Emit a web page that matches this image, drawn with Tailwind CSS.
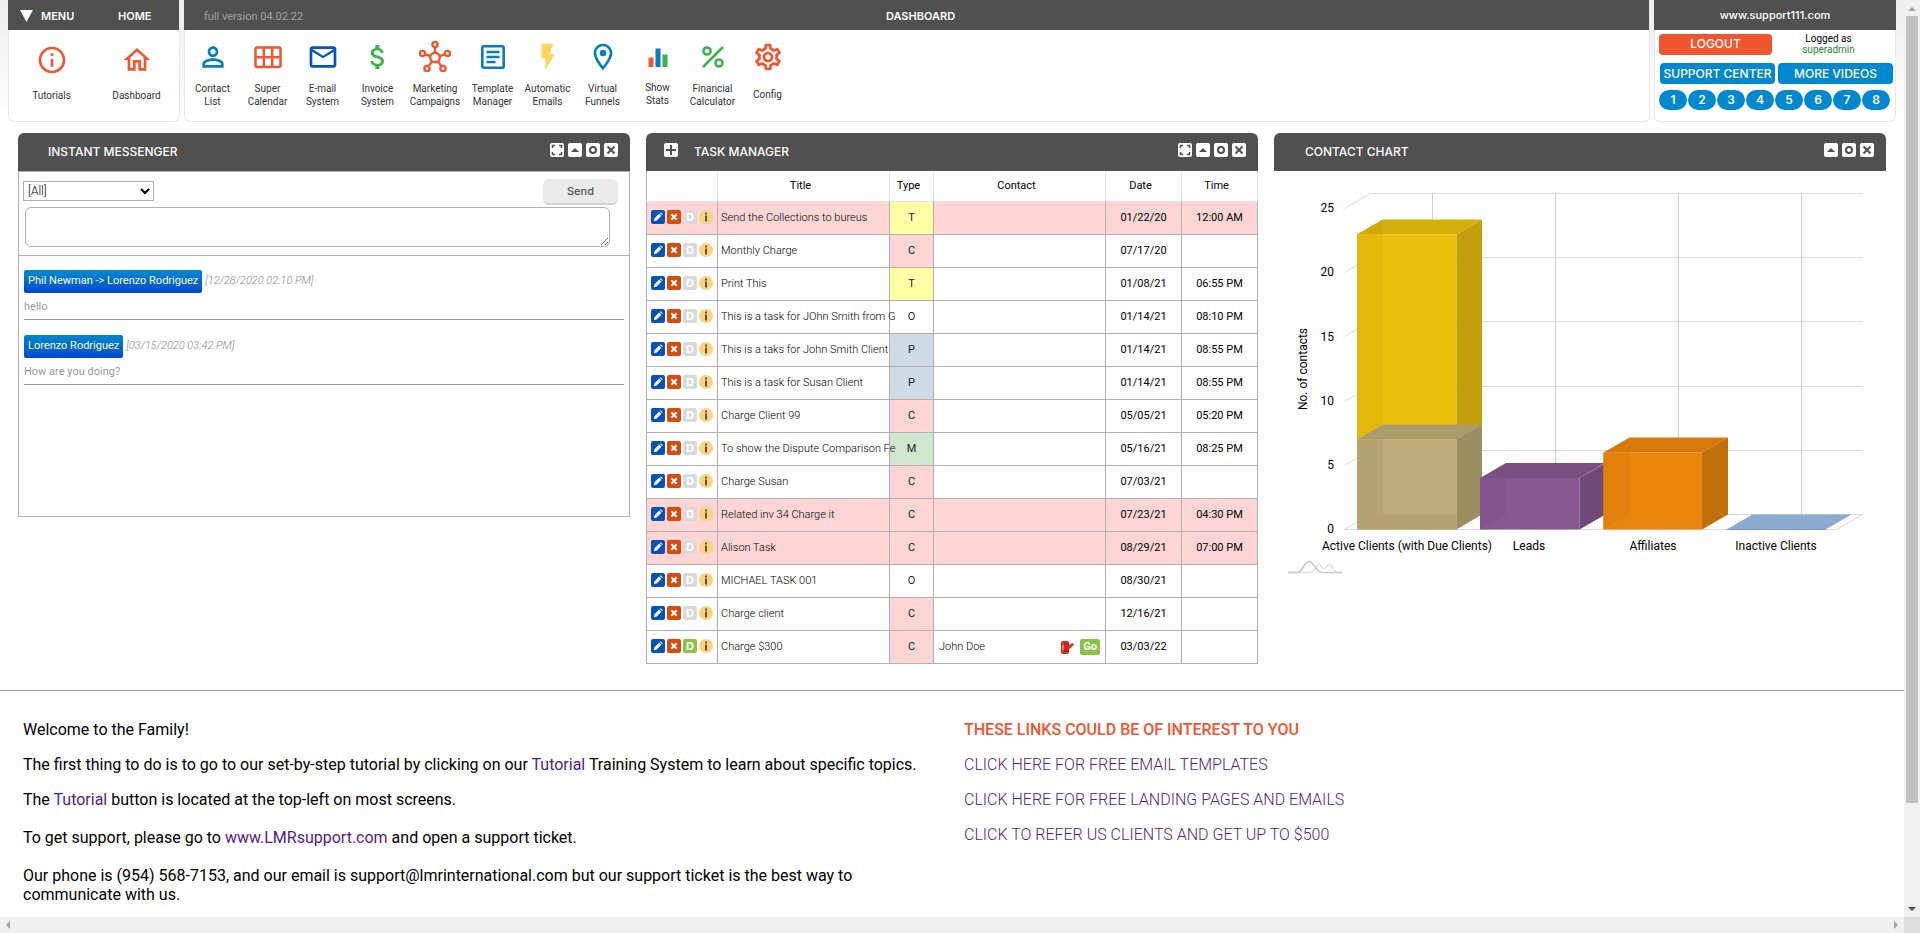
<!DOCTYPE html>
<html lang="en">
<head>
<meta charset="utf-8">
<title>Dashboard</title>
<script src="https://cdn.jsdelivr.net/npm/@tailwindcss/browser@4"></script>
</head>
<body class="h-screen flex flex-col overflow-hidden bg-white font-['Roboto',sans-serif] text-black">
<div class="flex flex-1 min-h-0">
<main class="flex-1 min-w-0 overflow-hidden">

<header class="flex gap-1 px-2 bg-linear-to-b from-[#eeeeee] to-white h-[122px]">
  <nav class="w-[172px] flex flex-col bg-white border border-t-0 border-[#e8e8e8] rounded-b-md" aria-label="Main">
    <div class="h-[30px] -ml-px bg-[#505050] text-white flex items-center font-['Inter',sans-serif] text-[11px] font-semibold pt-[2px]">
      <button class="flex items-center gap-2 pl-[12px] w-[110px]"><svg class="w-[13px] h-3" viewBox="0 0 13 12"><path d="M0 0h13L6.500 12z" fill="#fff"/></svg>MENU</button>
      <a href="#">HOME</a>
    </div>
    <div class="flex text-[10px] leading-[13px] text-center text-[#333] pt-[14px]">
      <a href="#" class="flex-1 flex flex-col items-center gap-[13px]"><svg class="size-8" viewBox="0 0 24 24" fill="#f0562f"><path d="M11 7h2v2h-2zm0 4h2v6h-2zm1-9C6.480 2 2 6.480 2 12s4.480 10 10 10 10-4.480 10-10S17.520 2 12 2zm0 18c-4.410 0-8-3.590-8-8s3.590-8 8-8 8 3.590 8 8-3.590 8-8 8z"/></svg>Tutorials</a>
      <a href="#" class="flex-1 flex flex-col items-center gap-[13px]"><svg class="size-8" viewBox="0 0 24 24" fill="#f0562f"><path d="M12 5.690l5 4.500V18h-2v-6H9v6H7v-7.810l5-4.500M12 3L2 12h3v8h6v-6h2v6h6v-8h3L12 3z"/></svg>Dashboard</a>
    </div>
  </nav>

  <section class="flex-1 min-w-0 flex flex-col bg-white border border-t-0 border-[#e8e8e8] rounded-b-md">
    <div class="h-[30px] -ml-px bg-[#505050] grid grid-cols-[1fr_auto_1fr] items-center pt-[2px] px-5">
      <span class="text-[11px] text-[#a0a0a0] pt-[2px]">full version 04.02.22</span>
      <h1 class="font-['Inter',sans-serif] text-[11px] font-semibold text-white pl-2">DASHBOARD</h1>
    </div>
    <div class="flex pt-[11px] text-[10px] leading-[13px] text-center text-[#333]">
      <a href="#" class="w-[55px] flex flex-col items-center gap-[9px]"><svg class="size-8" viewBox="0 0 24 24" fill="#067dbd"><path d="M12 6c1.100 0 2 .9 2 2s-.9 2-2 2-2-.9-2-2 .9-2 2-2m0 9c2.700 0 5.800 1.290 6 2v1H6v-.99c.2-.72 3.300-2.010 6-2.010m0-11C9.790 4 8 5.790 8 8s1.790 4 4 4 4-1.790 4-4-1.790-4-4-4zm0 9c-2.670 0-8 1.340-8 4v3h16v-3c0-2.660-5.330-4-8-4z"/></svg><span>Contact<br>List</span></a>
      <a href="#" class="w-[55px] flex flex-col items-center gap-[9px]"><svg class="size-8" viewBox="0 0 32 32" fill="none" stroke="#f0562f" stroke-width="2.500"><rect x="3.500" y="6.500" width="25" height="19.500" rx="1.500"/><path d="M3 16.200h26M11.800 6v20M20.200 6v20"/></svg><span>Super<br>Calendar</span></a>
      <a href="#" class="w-[55px] flex flex-col items-center gap-[9px]"><svg class="size-8" viewBox="0 0 24 24" fill="#0354bd"><path d="M22 6c0-1.100-.9-2-2-2H4c-1.100 0-2 .9-2 2v12c0 1.100.9 2 2 2h16c1.100 0 2-.9 2-2V6zm-2 0l-8 5-8-5h16zm0 12H4V8l8 5 8-5v10z"/></svg><span>E-mail<br>System</span></a>
      <a href="#" class="w-[55px] flex flex-col items-center gap-[9px]"><svg class="size-8" viewBox="0 0 24 24" fill="#39b54a"><path d="M11.800 10.900c-2.270-.59-3-1.200-3-2.150 0-1.090 1.010-1.850 2.700-1.850 1.780 0 2.440.85 2.500 2.100h2.210c-.07-1.720-1.120-3.300-3.210-3.810V3h-3v2.160c-1.940.42-3.500 1.680-3.500 3.610 0 2.310 1.910 3.460 4.700 4.130 2.500.6 3 1.480 3 2.410 0 .69-.49 1.790-2.700 1.790-2.060 0-2.870-.92-2.980-2.100h-2.200c.12 2.190 1.760 3.420 3.680 3.830V21h3v-2.150c1.950-.37 3.500-1.500 3.500-3.550 0-2.840-2.430-3.810-4.700-4.400z"/></svg><span>Invoice<br>System</span></a>
      <a href="#" class="w-[60px] flex flex-col items-center gap-[9px]"><svg class="size-8" viewBox="0 0 32 32" fill="none" stroke="#f0562f" stroke-width="2.400"><circle cx="16" cy="16.500" r="4.800"/><circle cx="16" cy="3.500" r="2.600"/><circle cx="3.500" cy="12.500" r="2.600"/><circle cx="28.500" cy="12.500" r="2.600"/><circle cx="8" cy="27.500" r="2.600"/><circle cx="24" cy="27.500" r="2.600"/><path d="M16 6v5.500M6 13.400l5.400 1.800M26 13.400l-5.400 1.800M9.500 25.400l3.600-5M22.500 25.400l-3.600-5"/></svg><span>Marketing<br>Campaigns</span></a>
      <a href="#" class="w-[55px] flex flex-col items-center gap-[9px]"><svg class="size-8" viewBox="0 0 32 32" fill="none" stroke="#067dbd" stroke-width="2.600"><rect x="5.300" y="5.300" width="21.400" height="21.400" rx="1.500"/><path d="M9.500 11h13M9.500 16h13M9.500 21h9"/></svg><span>Template<br>Manager</span></a>
      <a href="#" class="w-[55px] flex flex-col items-center gap-[9px]"><svg class="size-8" viewBox="0 0 24 24" fill="#ffd461"><path d="M7 2v11h3v9l7-12h-4l3-8z"/></svg><span>Automatic<br>Emails</span></a>
      <a href="#" class="w-[55px] flex flex-col items-center gap-[9px]"><svg class="size-8" viewBox="0 0 24 24" fill="#067dbd"><path d="M12 2C8.130 2 5 5.130 5 9c0 5.250 7 13 7 13s7-7.750 7-13c0-3.870-3.130-7-7-7zM7 9c0-2.760 2.240-5 5-5s5 2.240 5 5c0 2.880-2.880 7.190-5 9.880C9.920 16.210 7 11.850 7 9z"/><circle cx="12" cy="9" r="2.500"/></svg><span>Virtual<br>Funnels</span></a>
      <a href="#" class="w-[55px] flex flex-col items-center gap-[8px]"><svg class="size-8" viewBox="0 0 32 32"><path d="M6.500 16.500h5V26h-5z" fill="#f0562f"/><path d="M13.500 7.500h5V26h-5z" fill="#067dbd"/><path d="M20.500 13.500h5V26h-5z" fill="#39b54a"/></svg><span>Show<br>Stats</span></a>
      <a href="#" class="w-[55px] flex flex-col items-center gap-[9px]"><svg class="size-8" viewBox="0 0 32 32" fill="none" stroke="#39b54a" stroke-width="2.500"><circle cx="10" cy="10" r="3.600"/><circle cx="22" cy="22" r="3.600"/><path d="M6 26L26 6"/></svg><span>Financial<br>Calculator</span></a>
      <a href="#" class="w-[55px] flex flex-col items-center gap-[15px]"><svg class="size-8" viewBox="0 0 24 24" fill="#f0562f"><path d="M19.430 12.980c.04-.32.07-.64.07-.98 0-.34-.03-.66-.07-.98l2.110-1.650c.19-.15.24-.42.12-.64l-2-3.460c-.09-.16-.26-.25-.44-.25-.06 0-.12.01-.17.03l-2.490 1c-.52-.4-1.080-.73-1.690-.98l-.38-2.650C14.460 2.180 14.250 2 14 2h-4c-.25 0-.46.18-.49.42l-.38 2.650c-.61.25-1.170.59-1.690.98l-2.490-1c-.06-.02-.12-.03-.18-.03-.17 0-.34.09-.43.25l-2 3.460c-.13.22-.07.49.12.64l2.110 1.650c-.04.32-.07.65-.07.98 0 .33.03.66.07.98l-2.110 1.650c-.19.15-.24.42-.12.64l2 3.460c.09.16.26.25.44.25.06 0 .12-.01.17-.03l2.490-1c.52.4 1.080.73 1.690.98l.38 2.650c.03.24.24.42.49.42h4c.25 0 .46-.18.49-.42l.38-2.650c.61-.25 1.170-.59 1.690-.98l2.490 1c.06.02.12.03.18.03.17 0 .34-.09.43-.25l2-3.460c.12-.22.07-.49-.12-.64l-2.110-1.650zm-1.980-1.710c.04.31.05.52.05.73 0 .21-.02.43-.05.73l-.14 1.130.89.7 1.080.84-.7 1.210-1.270-.51-1.040-.42-.9.68c-.43.32-.84.56-1.250.73l-1.060.43-.16 1.130-.2 1.350h-1.400l-.19-1.350-.16-1.130-1.060-.43c-.43-.18-.83-.41-1.230-.71l-.91-.7-1.060.43-1.270.51-.7-1.210 1.080-.84.89-.7-.14-1.130c-.03-.31-.05-.54-.05-.74s.02-.43.05-.73l.14-1.130-.89-.7-1.080-.84.7-1.210 1.270.51 1.040.42.9-.68c.43-.32.84-.56 1.250-.73l1.060-.43.16-1.130.2-1.350h1.390l.19 1.350.16 1.130 1.060.43c.43.18.83.41 1.230.71l.91.7 1.060-.43 1.270-.51.7 1.210-1.070.85-.89.7.14 1.130zM12 8c-2.210 0-4 1.790-4 4s1.790 4 4 4 4-1.790 4-4-1.790-4-4-4zm0 6c-1.100 0-2-.9-2-2s.9-2 2-2 2 .9 2 2-.9 2-2 2z"/></svg><span>Config</span></a>
    </div>
  </section>

  <aside class="w-[242px] flex flex-col bg-white border border-t-0 border-[#e8e8e8] rounded-b-md font-['Inter',sans-serif]">
    <div class="h-[30px] -mx-px bg-[#505050] text-white flex items-center justify-center text-[11px] font-medium pt-px">www.support111.com</div>
    <div class="flex items-center pl-1 pt-[3px]">
      <button class="w-[113px] h-[21px] rounded bg-[#ef562f] text-white text-xs font-medium">LOGOUT</button>
      <p class="flex-1 text-center font-['Roboto',sans-serif] text-[10px] leading-[11px] pr-[10px]">Logged as<br><span class="text-[#198a32]">superadmin</span></p>
    </div>
    <div class="flex gap-[3px] px-[5px] pt-2 -mr-1">
      <a href="#" class="w-[115px] h-[21px] rounded bg-[#0088ce] text-white text-xs font-medium flex items-center justify-center whitespace-nowrap">SUPPORT CENTER</a>
      <a href="#" class="w-[115px] h-[21px] rounded bg-[#0088ce] text-white text-xs font-medium flex items-center justify-center whitespace-nowrap">MORE VIDEOS</a>
    </div>
    <div class="flex gap-px pl-1 pt-[6px] text-white text-xs font-semibold">
      <button class="w-7 h-5 rounded-full bg-[#0088ce]">1</button><button class="w-7 h-5 rounded-full bg-[#0088ce]">2</button><button class="w-7 h-5 rounded-full bg-[#0088ce]">3</button><button class="w-7 h-5 rounded-full bg-[#0088ce]">4</button><button class="w-7 h-5 rounded-full bg-[#0088ce]">5</button><button class="w-7 h-5 rounded-full bg-[#0088ce]">6</button><button class="w-7 h-5 rounded-full bg-[#0088ce]">7</button><button class="w-7 h-5 rounded-full bg-[#0088ce]">8</button>
    </div>
  </aside>
</header>

<svg class="hidden">
  <symbol id="expand" viewBox="0 0 14 14"><rect width="14" height="14" rx="2" fill="#fff"/><path d="M2.500 5V2.500H5M9 2.500h2.500V5M11.500 9v2.500H9M5 11.500H2.500V9" fill="none" stroke="#505050" stroke-width="1.600"/></symbol>
  <symbol id="up" viewBox="0 0 14 14"><rect width="14" height="14" rx="2" fill="#fff"/><path d="M3 9l4-4 4 4z" fill="#505050"/></symbol>
  <symbol id="ring" viewBox="0 0 14 14"><rect width="14" height="14" rx="2" fill="#fff"/><circle cx="7" cy="7" r="3" fill="none" stroke="#505050" stroke-width="2"/></symbol>
  <symbol id="close" viewBox="0 0 14 14"><rect width="14" height="14" rx="2" fill="#fff"/><path d="M3.500 3.500l7 7M10.500 3.500l-7 7" stroke="#505050" stroke-width="2"/></symbol>
  <symbol id="plus" viewBox="0 0 14 14"><rect width="14" height="14" rx="2" fill="#fff"/><path d="M7 2v10M2 7h10" stroke="#505050" stroke-width="2"/></symbol>
  <symbol id="edit" viewBox="0 0 14 14"><rect width="14" height="14" rx="2" fill="#0652b8"/><path d="M2.800 11.200l.7-2.900 4.700-4.700 2.200 2.200-4.700 4.700zM8.900 2.900l.8-.7 2.100 2.100-.7.800z" fill="#fff"/></symbol>
  <symbol id="del" viewBox="0 0 14 14"><rect width="14" height="14" rx="2" fill="#d84b0c"/><path d="M4.300 4.300l5.400 5.400M9.700 4.300L4.300 9.700" stroke="#fff" stroke-width="2"/></symbol>
  <symbol id="info" viewBox="0 0 14 14"><circle cx="7" cy="7" r="7" fill="#fcd27c"/><path d="M6 2.500h2v2H6zM6 5.500h2v6H6z" fill="#555"/></symbol>
</svg>

<div class="grid grid-cols-3 gap-4 px-[18px] pt-[11px] items-start">
  <section>
    <div class="h-[38px] bg-[#505050] rounded-t-md flex items-start pt-[10px] pl-[30px] pr-3 gap-1">
      <h2 class="flex-1 font-['Inter',sans-serif] text-xs leading-[18px] font-medium text-white">INSTANT MESSENGER</h2>
      <button aria-label="Expand"><svg class="size-[14px]"><use href="#expand"/></svg></button>
      <button aria-label="Collapse"><svg class="size-[14px]"><use href="#up"/></svg></button>
      <button aria-label="Refresh"><svg class="size-[14px]"><use href="#ring"/></svg></button>
      <button aria-label="Close"><svg class="size-[14px]"><use href="#close"/></svg></button>
    </div>
    <div class="h-[346px] border border-[#b0b0b0] text-[11px]">
      <div class="h-[84px] border-b border-[#b0b0b0] pt-[7px] pl-1 pr-[11px]">
        <div class="flex justify-between items-start h-7">
          <select aria-label="Recipient" class="mt-[2px] w-[131px] h-5 border border-[#b0b0b0] bg-white text-xs font-light"><option>[All]</option></select>
          <button class="w-[75px] h-[26px] rounded-md bg-[#ebebeb] border-b-2 border-[#d0d0d0] text-[#505050] font-['Inter',sans-serif] text-[11px] font-medium">Send</button>
        </div>
        <textarea aria-label="Message" class="block ml-[2px] w-[585px] max-w-full h-10 border border-[#b0b0b0] rounded-md"></textarea>
      </div>
      <div class="px-[5px]">
        <article class="pt-[14px] border-b border-[#999] h-[64px]">
          <div class="flex items-center gap-[3px] h-[23px]"><span class="h-full px-1 rounded-xs bg-linear-to-b from-[#0088ce] to-[#0046ce] text-white flex items-center">Phil Newman -&gt; Lorenzo Rodriguez</span><time class="italic font-light text-[#888]">[12/28/2020 02:10 PM]</time></div>
          <p class="text-[#999] leading-4 mt-[6px]">hello</p>
        </article>
        <article class="pt-[15px] border-b border-[#999] h-[65px]">
          <div class="flex items-center gap-[3px] h-[23px]"><span class="h-full px-1 rounded-xs bg-linear-to-b from-[#0088ce] to-[#0046ce] text-white flex items-center">Lorenzo Rodriguez</span><time class="italic font-light text-[#888]">[03/15/2020 03:42 PM]</time></div>
          <p class="text-[#999] leading-4 mt-[6px]">How are you doing?</p>
        </article>
      </div>
    </div>
  </section>

  <section>
    <div class="h-[38px] bg-[#505050] rounded-t-md flex items-start pt-[10px] pl-[18px] pr-3 gap-1">
      <button aria-label="Add task"><svg class="size-[14px]"><use href="#plus"/></svg></button>
      <h2 class="flex-1 pl-3 font-['Inter',sans-serif] text-xs leading-[18px] font-medium text-white">TASK MANAGER</h2>
      <button aria-label="Expand"><svg class="size-[14px]"><use href="#expand"/></svg></button>
      <button aria-label="Collapse"><svg class="size-[14px]"><use href="#up"/></svg></button>
      <button aria-label="Refresh"><svg class="size-[14px]"><use href="#ring"/></svg></button>
      <button aria-label="Close"><svg class="size-[14px]"><use href="#close"/></svg></button>
    </div>
    <table class="w-full table-fixed border-collapse text-[11px] text-center">
      <colgroup><col class="w-[71px]"><col><col class="w-11"><col class="w-[172px]"><col class="w-[76px]"><col class="w-[76px]"></colgroup>
      <thead><tr class="h-[30px]">
        <th aria-label="Actions" class="border border-[#e4e4e4] border-t-0 border-l-[#b0b0b0]"></th><th class="border border-[#e4e4e4] border-t-0 font-normal pr-[6px]">Title</th><th class="border border-[#e4e4e4] border-t-0 font-normal pr-[6px]">Type</th><th class="border border-[#e4e4e4] border-t-0 font-normal pr-[6px]">Contact</th><th class="border border-[#e4e4e4] border-t-0 font-normal pr-[6px]">Date</th><th class="border border-[#e4e4e4] border-t-0 font-normal pr-[6px]">Time</th>
      </tr></thead>
      <tbody id="tasks"></tbody>
    </table>
  </section>

  <section>
    <div class="h-[38px] bg-[#505050] rounded-t-md flex items-start pt-[10px] pl-[31px] pr-3 gap-1">
      <h2 class="flex-1 font-['Inter',sans-serif] text-xs leading-[18px] font-medium text-white">CONTACT CHART</h2>
      <button aria-label="Collapse"><svg class="size-[14px]"><use href="#up"/></svg></button>
      <button aria-label="Refresh"><svg class="size-[14px]"><use href="#ring"/></svg></button>
      <button aria-label="Close"><svg class="size-[14px]"><use href="#close"/></svg></button>
    </div>
    <svg class="w-full text-xs" viewBox="0 0 612 414" role="img" aria-label="Number of contacts by kind">
      <g fill="none" stroke="#d9d9d9">
        <path d="M70.500 37.500L96.500 22.500H588.500M70.500 101.500L96.500 86.500H588.500M70.500 165.500L96.500 150.500H588.500M70.500 230.500L96.500 215.500H588.500M70.500 294.500L96.500 279.500H588.500M70.500 358.500L96.500 343.500H588.500L562.500 358.500H70.500"/>
        <path d="M158.500 22v321M281.500 22v321M404.500 22v321M527.500 22v321" stroke="#cfcfcf"/>
      </g>
      <path d="M83 63.500L109 48.500H208L182.500 63.500z" fill="#d6b00a"/>
      <path d="M83 63.500L109 48.500v15z" fill="#cfa90a"/>
      <path d="M83 63.500h99.500v205H83z" fill="#ebc00b"/>
      <path d="M83 63.500h26v190L83 268.500z" fill="#e3b80a"/>
      <path d="M182.500 63.500L208 48.500v205l-25.500 15z" fill="#c3a00b"/>
      <path d="M83 268.500L109 253.500h99l-25.500 15z" fill="#ab9d6b"/>
      <path d="M83 268.500h99.500v90H83z" fill="#bdac78"/>
      <path d="M83 268.500h26v75L83 358.500z" fill="#b5a470"/>
      <path d="M83 358.500l26-15h73.500v15z" fill="#b3a16e"/>
      <path d="M182.500 268.500l25.500-15v90l-25.500 15z" fill="#9c8e61"/>
      <path d="M206 307l26-15h99l-25.500 15z" fill="#7a5081"/>
      <path d="M206 307h99.500v51.500H206z" fill="#865a90"/>
      <path d="M206 307h26v36.500l-26 15z" fill="#81558b"/>
      <path d="M305.500 307l26-15v51.500l-26 15z" fill="#6f4a78"/>
      <path d="M329.500 281.500l26-15H454l-26 15z" fill="#d6790a"/>
      <path d="M329.500 281.500H428v77h-98.500z" fill="#ea860b"/>
      <path d="M329.500 281.500h26v62l-26 15z" fill="#e2800b"/>
      <path d="M428 281.500l26-15v77l-26 15z" fill="#c1700b"/>
      <path d="M452.500 358.500l26-15h99l-26 15z" fill="#8aabcf"/>
      <path d="M452.500 358.500h99" stroke="#7896b8"/>
      <g text-anchor="end"><text x="60" y="41">25</text><text x="60" y="105">20</text><text x="60" y="170">15</text><text x="60" y="234">10</text><text x="60" y="298">5</text><text x="60" y="362">0</text></g>
      <g text-anchor="middle"><text x="133" y="379">Active Clients (with Due Clients)</text><text x="255" y="379">Leads</text><text x="379" y="379">Affiliates</text><text x="502" y="379">Inactive Clients</text><text x="33" y="198" transform="rotate(-90 33 198)">No. of contacts</text></g>
      <g fill="none" stroke-width="1.600"><path d="M14 401.500h20c8 0 8-8 11-8s3 4 5 4 3-5 6-4 3 8 8 8h4" stroke="#e2e2e2"/><path d="M14 401.500h9c6 0 7-11 12-11s7 11 13 11h20" stroke="#c8c8c8"/></g>
    </svg>
  </section>
</div>

<hr class="mt-[26px] border-t border-[#999]">
<footer class="grid grid-cols-2 text-base leading-[19px] pt-[29px]">
  <div class="pl-[23px] pr-6 flex flex-col">
    <p>Welcome to the Family!</p>
    <p class="mt-4">The first thing to do is to go to our set-by-step tutorial by clicking on our <a href="#" class="text-[#551a8b]">Tutorial</a> Training System to learn about specific topics.</p>
    <p class="mt-4">The <a href="#" class="text-[#551a8b]">Tutorial</a> button is located at the top-left on most screens.</p>
    <p class="mt-[19px]">To get support, please go to <a href="#" class="text-[#551a8b]">www.LMRsupport.com</a> and open a support ticket.</p>
    <p class="mt-[19px] pr-12">Our phone is (954) 568-7153, and our email is support@lmrinternational.com but our support ticket is the best way to communicate with us.</p>
  </div>
  <div class="pl-3 flex flex-col items-start gap-4 font-light text-[#551a8b]">
    <h3 class="font-medium text-[#ef562f]">THESE LINKS COULD BE OF INTEREST TO YOU</h3>
    <a href="#">CLICK HERE FOR FREE EMAIL TEMPLATES</a>
    <a href="#">CLICK HERE FOR FREE LANDING PAGES AND EMAILS</a>
    <a href="#">CLICK TO REFER US CLIENTS AND GET UP TO $500</a>
  </div>
</footer>
</main>

<div class="w-4 bg-[#f1f1f1] flex flex-col items-center" aria-hidden="true">
  <svg class="size-4 shrink-0" viewBox="0 0 16 16"><path d="M4 11l4-4 4 4z" fill="#a3a3a3"/></svg>
  <div class="w-3 flex-1 bg-[#c1c1c1]"></div>
  <div class="h-[98px]"></div>
  <svg class="size-4 shrink-0" viewBox="0 0 16 16"><path d="M4 6h8l-4 4z" fill="#505050"/></svg>
</div>
</div>
<div class="h-4 shrink-0 bg-[#f0f0f0] flex justify-between" aria-hidden="true">
  <svg class="size-4" viewBox="0 0 16 16"><path d="M10 4v8L6 8z" fill="#a3a3a3"/></svg>
  <div class="flex"><svg class="size-4" viewBox="0 0 16 16"><path d="M6 4v8l4-4z" fill="#a3a3a3"/></svg><div class="size-4 bg-[#dcdcdc]"></div></div>
</div>

<script>
const typeColors = {T:'bg-[#ffffa5]', C:'bg-[#ffd5d5]', O:'', P:'bg-[#cedbe7]', M:'bg-[#cfe7cf]'};
// title, type, date, time, overdue
const tasks = [
  ['Send the Collections to bureus','T','01/22/20','12:00 AM',1],
  ['Monthly Charge','C','07/17/20',''],
  ['Print This','T','01/08/21','06:55 PM'],
  ['This is a task for JOhn Smith from G','O','01/14/21','08:10 PM'],
  ['This is a taks for John Smith Client','P','01/14/21','08:55 PM'],
  ['This is a task for Susan Client','P','01/14/21','08:55 PM'],
  ['Charge Client 99','C','05/05/21','05:20 PM'],
  ['To show the Dispute Comparison Fe','M','05/16/21','08:25 PM'],
  ['Charge Susan','C','07/03/21',''],
  ['Related inv 34 Charge it','C','07/23/21','04:30 PM',1],
  ['Alison Task','C','08/29/21','07:00 PM',1],
  ['MICHAEL TASK 001','O','08/30/21',''],
  ['Charge client','C','12/16/21',''],
  ['Charge $300','C','03/03/22','',0,'John Doe']
];
const cell = 'border border-[#b0b0b0] pt-px';
document.getElementById('tasks').innerHTML = tasks.map(([title,type,date,time,late,contact]) => `
<tr class="h-[33px] ${late ? 'bg-[#ffd5d5]' : ''}">
  <td class="border border-[#b0b0b0] pb-px"><div class="flex gap-[2px] pl-1">
    <button aria-label="Edit"><svg class="size-[14px]"><use href="#edit"/></svg></button>
    <button aria-label="Delete"><svg class="size-[14px]"><use href="#del"/></svg></button>
    <button class="w-[14px] h-[14px] rounded-xs ${contact ? 'bg-[#8bc34a]' : 'bg-[#dadada]'} text-white text-[11px] leading-[14px] font-bold font-['Inter',sans-serif]">D</button>
    <button aria-label="Info"><svg class="size-[14px]"><use href="#info"/></svg></button></div></td>
  <td class="${cell} pl-[3px] text-left font-light whitespace-nowrap">${title}</td>
  <td class="${cell} ${typeColors[type]} text-[#222]">${type}</td>
  <td class="${cell}">${contact ? `<div class="flex items-center pl-[5px] pr-[5px] gap-[5px] font-light"><span class="flex-1 text-left">${contact}</span><svg class="size-[15px]" viewBox="0 0 15 15"><path d="M8 6l4-3 2 1-1 2-5 4z" fill="#c9382a"/><rect x="1" y="1" width="8" height="13" rx="2" fill="#d42a1c"/><path d="M3 3v9" stroke="#f59a8d" stroke-width="1.500"/><path d="M1 4h8M1 11h8" stroke="#9a1409"/></svg><button class="w-5 h-4 rounded-xs bg-[#8bc34a] text-white font-bold leading-4">Go</button></div>` : ''}</td>
  <td class="${cell}">${date}</td>
  <td class="${cell}">${time}</td>
</tr>`).join('');
</script>
</body>
</html>
